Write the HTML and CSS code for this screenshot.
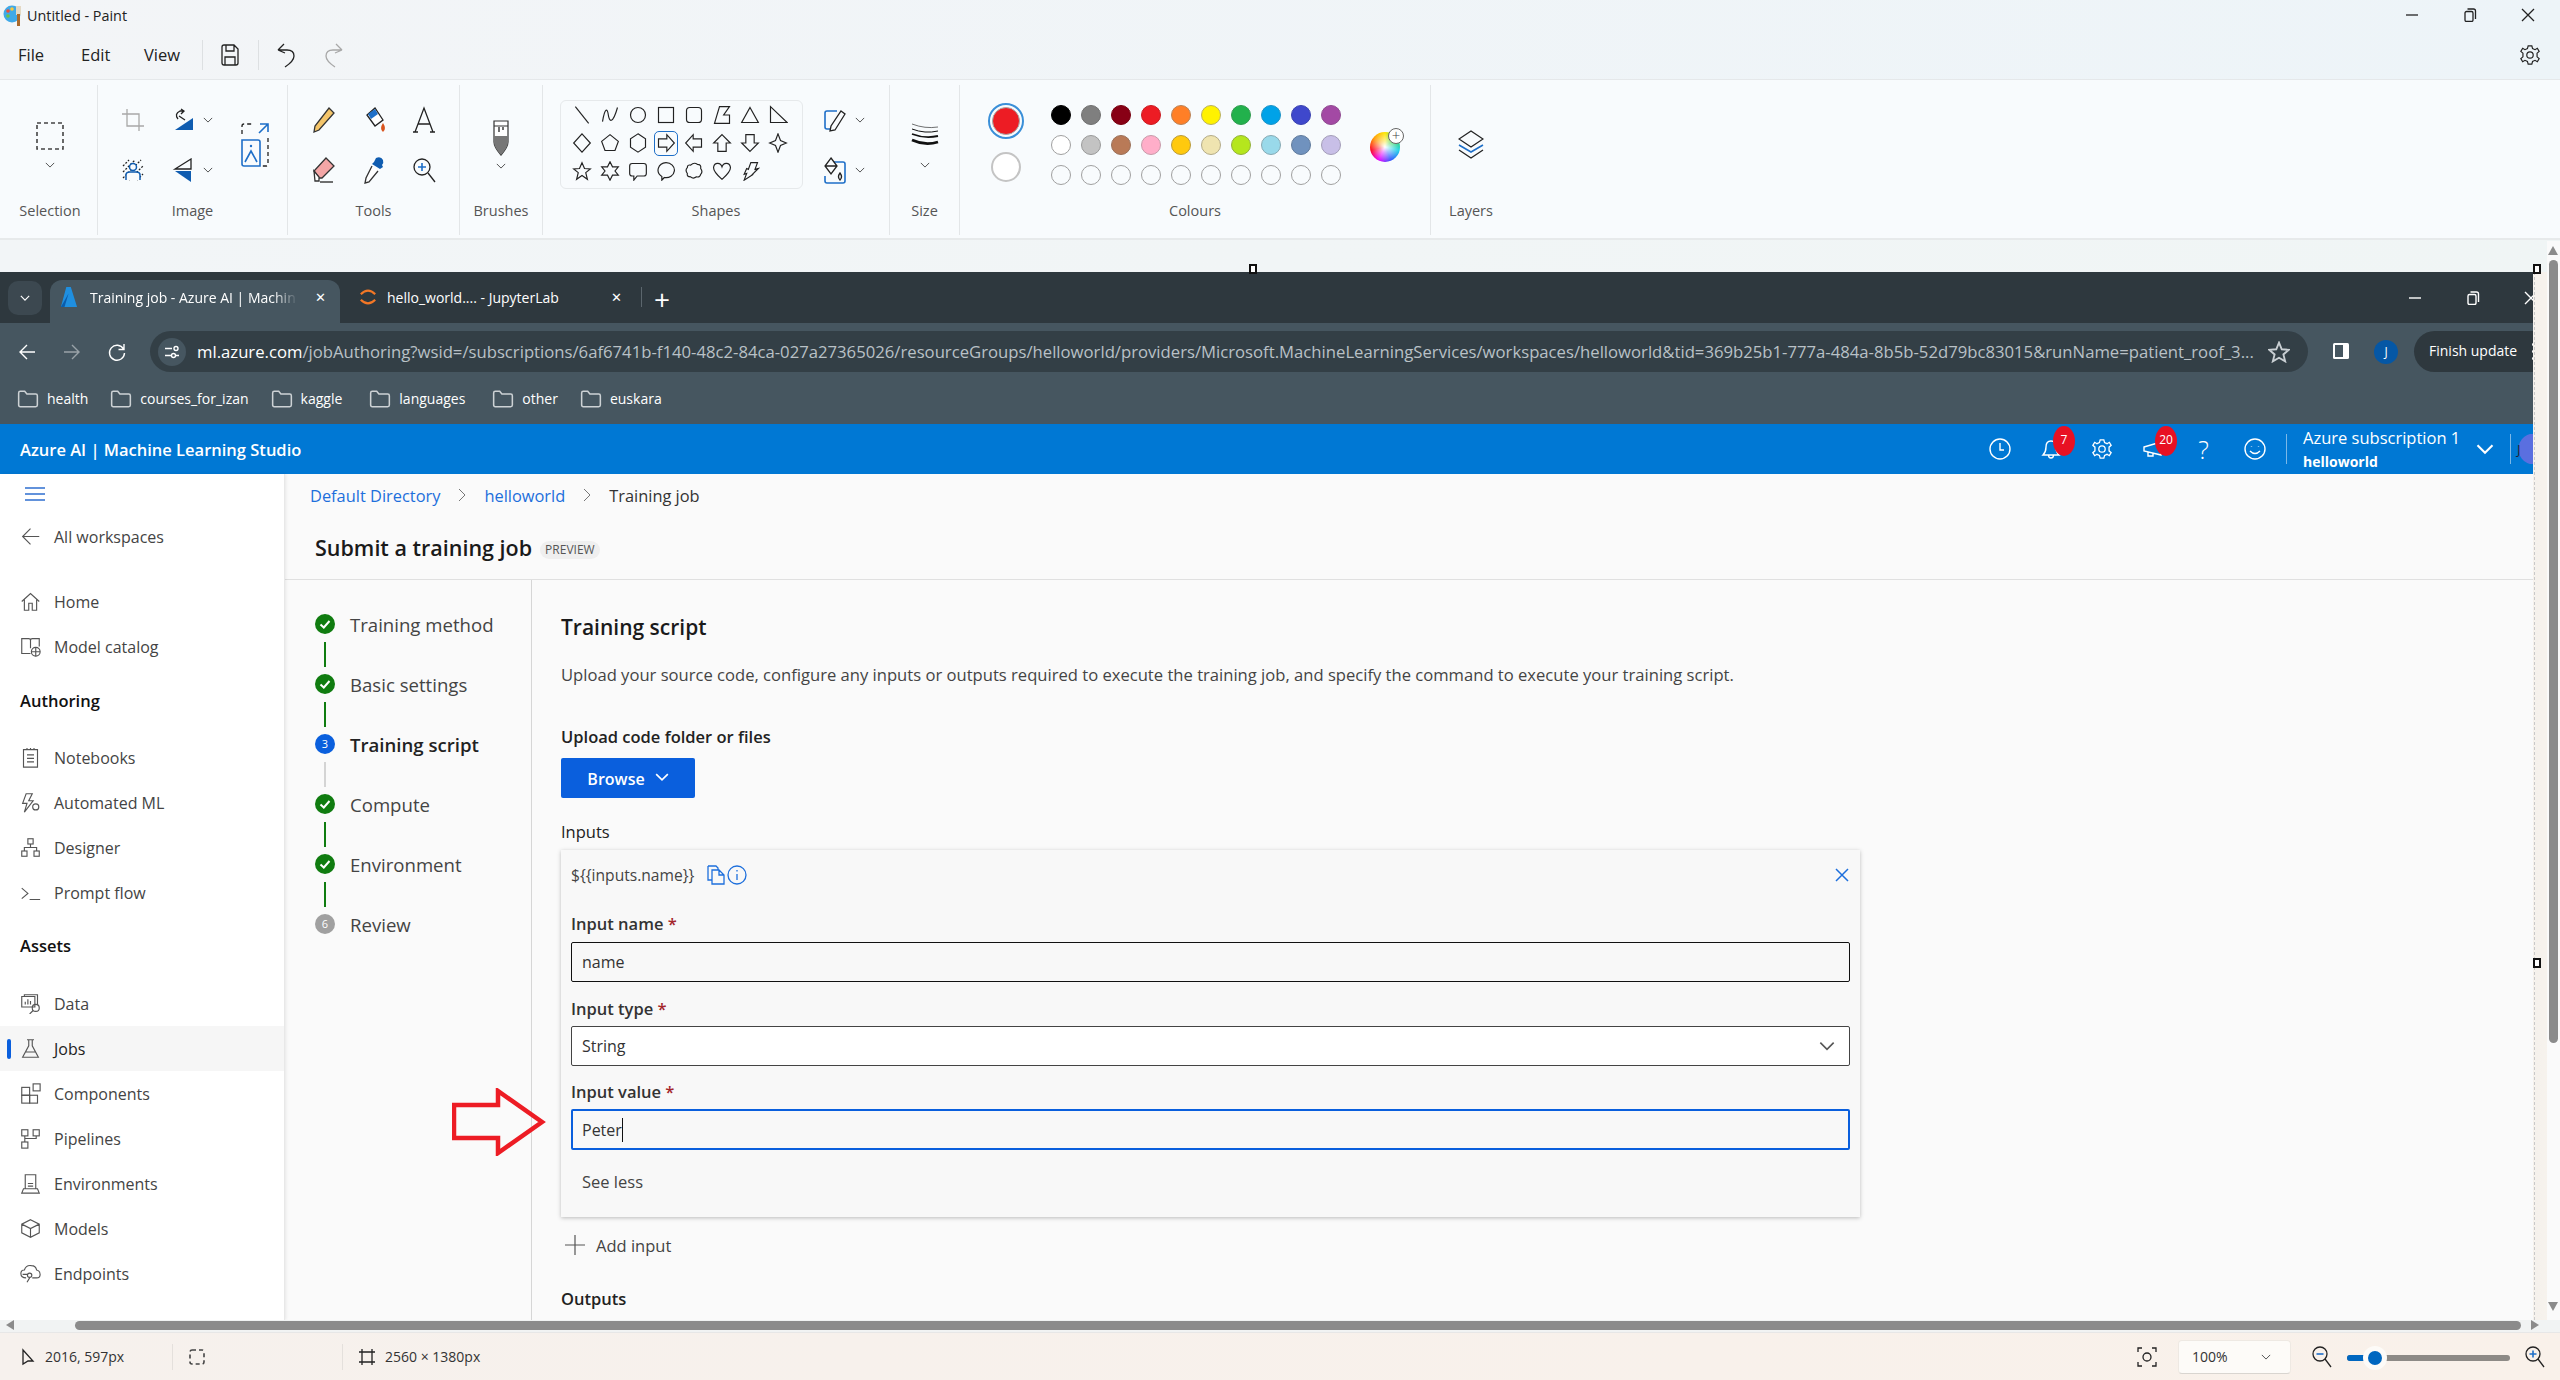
FILE: index.html
```html
<!DOCTYPE html>
<html>
<head>
  <title>Untitled - Paint</title>
  <link rel="stylesheet" href="styles.css">
</head>
<body>
<svg class="defs" width="0" height="0">
  <symbol id="chev" viewBox="0 0 12 12"><path d="M1 3.5 L6 8.5 L11 3.5"/></symbol>
  <symbol id="folder" viewBox="0 0 20 18"><path d="M1.5 3.5 Q1.5 2 3 2 H7 L9 4.5 H17 Q18.5 4.5 18.5 6 V14.5 Q18.5 16 17 16 H3 Q1.5 16 1.5 14.5 Z"/></symbol>
  <symbol id="check" viewBox="0 0 20 20"><circle class="solid" cx="10" cy="10" r="10"/><path class="tick" d="M5.5 10.5 L8.8 13.5 L14.5 7"/></symbol>
</svg>

<div class="app">
  <div class="paint-top">
    <div class="titlebar">
      <svg class="paint-logo" viewBox="0 0 20 24" width="20" height="24">
        <circle cx="9" cy="11" r="8.5" fill="#3fa9e8"/>
        <circle cx="5" cy="8" r="1.8" fill="#e94f3d"/>
        <circle cx="9" cy="6" r="1.8" fill="#f6c83e"/>
        <circle cx="5" cy="13" r="1.8" fill="#6cc24a"/>
        <rect x="13" y="3" width="5" height="9" fill="#e4d9c4"/>
        <rect x="14" y="11" width="3" height="12" fill="#a8692c"/>
      </svg>
      <span class="title-text">Untitled - Paint</span>
      <div class="win-btns">
        <svg class="ic-line" viewBox="0 0 14 14" width="14" height="14"><path d="M1 7 H13"/></svg>
        <svg class="ic-line" viewBox="0 0 14 14" width="14" height="14"><rect x="2" y="3.5" width="8" height="10" rx="1.5"/><path d="M4.5 1 H10.5 Q12.5 1 12.5 3 V11"/></svg>
        <svg class="ic-line" viewBox="0 0 14 14" width="14" height="14"><path d="M1 1 L13 13 M13 1 L1 13"/></svg>
      </div>
    </div>
    <div class="menubar">
      <span class="menu-item">File</span>
      <span class="menu-item">Edit</span>
      <span class="menu-item">View</span>
      <span class="menu-sep"></span>
      <svg class="ic-line" viewBox="0 0 20 24" width="20" height="26"><path d="M2 4 Q2 2 4 2 H14 L18 6 V20 Q18 22 16 22 H4 Q2 22 2 20 Z M6 2 V8 H14 V2 M5 22 V14 H15 V22"/></svg>
      <span class="menu-sep"></span>
      <svg class="ic-line" viewBox="0 0 20 28" width="20" height="28"><path d="M2 9 L8 3 M2 9 L9 12 M2 9 H11 Q18 9 18 15 Q18 20 9 26"/></svg>
      <svg class="ic-line dim redo" viewBox="0 0 20 28" width="20" height="28"><path d="M18 9 L12 3 M18 9 L11 12 M18 9 H9 Q2 9 2 15 Q2 20 11 26"/></svg>
      <svg class="ic-line gear-top" viewBox="0 0 24 24" width="22" height="22"><circle cx="12" cy="12" r="3.5"/><path d="M10 2 H14 L14.8 5 L17.5 6.2 L20 4.7 L22 8 L19.7 10 V14 L22 16 L20 19.3 L17.5 17.8 L14.8 19 L14 22 H10 L9.2 19 L6.5 17.8 L4 19.3 L2 16 L4.3 14 V10 L2 8 L4 4.7 L6.5 6.2 L9.2 5 Z"/></svg>
    </div>
  </div>

  <div class="ribbon">
    <div class="group g-selection">
      <div class="group-body col-center">
        <svg class="ic-line dashed" viewBox="0 0 28 28" width="28" height="28"><rect x="1" y="1" width="26" height="26"/></svg>
        <svg class="chev chev-big" width="10" height="10"><use href="#chev"/></svg>
      </div>
      <div class="group-label">Selection</div>
    </div>

    <div class="group g-image">
      <div class="group-body tool-grid image-grid">
        <svg class="ic-line dim" viewBox="0 0 24 24" width="24" height="24"><path d="M6 1 V18 H23 M1 6 H18 V23"/></svg>
        <div class="split">
          <svg viewBox="0 0 24 24" width="24" height="24"><path fill="#0f5cb0" d="M22 10 V22 H4 Z"/><path class="stroke" d="M7 11 Q3 6 9 3 H13 M10 1 L13 3 L10 6 M14 12 L8 8"/></svg>
          <svg class="chev" width="10" height="10"><use href="#chev"/></svg>
        </div>
        <svg class="ic-wide-span" viewBox="0 0 30 46" width="30" height="46"><path class="stroke-blue" d="M2 18 H18 Q20 18 20 20 V44 H4 Q2 44 2 42 Z M5 40 L11 29 L17 40 M20 2 L28 2 L28 10 M28 2 L19 11"/><path class="stroke dash-dark" d="M2 12 V4 Q2 2 4 2 H14 M28 16 V42 Q28 44 26 44 H22"/><circle cx="11" cy="24" r="1.2" fill="#1e6fc8"/></svg>
        <svg viewBox="0 0 24 24" width="24" height="24"><path class="stroke" stroke-dasharray="2 1.5" d="M2 8 L8 2 M2 14 L14 2 M2 20 L20 2 M8 22 L22 8 M16 22 L22 16"/><circle cx="12" cy="9" r="3.5" fill="#f9fbfd" stroke="#0f5cb0" stroke-width="1.5"/><path d="M5 22 V17 Q5 14 9 14 H15 Q19 14 19 17 V22" fill="#f9fbfd" stroke="#0f5cb0" stroke-width="1.5"/></svg>
        <div class="split">
          <svg viewBox="0 0 24 24" width="24" height="24"><path class="stroke" d="M20 1 L4 11 H20 Z"/><path fill="#0f5cb0" d="M4 13 H20 V24 Z"/></svg>
          <svg class="chev" width="10" height="10"><use href="#chev"/></svg>
        </div>
      </div>
      <div class="group-label">Image</div>
    </div>

    <div class="group g-tools">
      <div class="group-body tool-grid tools-grid">
        <svg viewBox="0 0 24 28" width="24" height="28"><path fill="#f4c56a" stroke="#333" stroke-width="1.3" d="M17 2 L22 7 L7 24 L2 26 L3 20 Z"/></svg>
        <svg viewBox="0 0 26 28" width="26" height="28"><path fill="#fff" stroke="#222" stroke-width="1.3" d="M6 9 L14 2 L22 14 L14 20 Z"/><path fill="#1e6fc8" d="M7 8 L14 3 L17 8 L10 13 Z"/><path fill="#d9541e" d="M22 17 Q26 23 22 26 Q18 23 22 17 Z"/></svg>
        <svg viewBox="0 0 24 28" width="24" height="28"><path class="stroke" d="M3 26 L12 2 L21 26 M6 18 H18 M1 26 H6 M18 26 H23"/></svg>
        <svg viewBox="0 0 24 28" width="24" height="28"><path fill="#f4a6a6" stroke="#333" stroke-width="1.3" d="M14 2 L22 10 L10 22 H7 L2 15 Z"/><path fill="#fff" stroke="#333" stroke-width="1.3" d="M2 15 L7 21 V25 H3 Z"/><path class="stroke" d="M8 26 H21"/></svg>
        <svg viewBox="0 0 24 28" width="24" height="28"><path fill="#fff" stroke="#333" stroke-width="1.3" d="M10 10 L4 22 L3 27 L7 26 L16 15"/><path fill="#0f5cb0" d="M14 2 Q19 0 21 4 Q22 7 20 9 L21 11 L18 13 L10 8 L12 6 Z"/></svg>
        <svg viewBox="0 0 24 28" width="24" height="28"><circle class="stroke" cx="10" cy="11" r="8"/><path class="stroke" d="M16 17 L23 26"/><path class="stroke-blue" d="M6 11 H14 M10 7 V15"/></svg>
      </div>
      <div class="group-label">Tools</div>
    </div>

    <div class="group g-brushes">
      <div class="group-body col-center">
        <svg viewBox="0 0 20 36" width="20" height="36"><path fill="#fff" stroke="#333" stroke-width="1.2" d="M3 1 H17 V6 H3 Z M3 6 H17 V22 Q17 27 10 35 Q3 27 3 22 Z"/><path fill="#777" d="M3 16 H17 V22 Q17 27 10 35 Q3 27 3 22 Z"/><path class="stroke" d="M8 7 V12 M12 7 V10"/></svg>
        <svg class="chev chev-brush" width="10" height="10"><use href="#chev"/></svg>
      </div>
      <div class="group-label">Brushes</div>
    </div>

    <div class="group g-shapes">
      <div class="group-body shapes-row">
        <div class="shape-box">
          <svg class="shape" viewBox="0 0 24 24"><path d="M4 2 L20 22"/></svg>
          <svg class="shape" viewBox="0 0 24 24"><path d="M3 20 C6 2 9 4 10 12 C11 20 15 24 21 3"/></svg>
          <svg class="shape" viewBox="0 0 24 24"><circle cx="12" cy="12" r="9"/></svg>
          <svg class="shape" viewBox="0 0 24 24"><rect x="3" y="3" width="18" height="18"/></svg>
          <svg class="shape" viewBox="0 0 24 24"><rect x="3" y="3" width="18" height="18" rx="4"/></svg>
          <svg class="shape" viewBox="0 0 24 24"><path d="M9 2 H21 L14 12 H21 V22 H3 Z"/></svg>
          <svg class="shape" viewBox="0 0 24 24"><path d="M12 3 L22 21 H2 Z"/></svg>
          <svg class="shape" viewBox="0 0 24 24"><path d="M3 2 L23 21 H3 Z"/></svg>
          <svg class="shape" viewBox="0 0 24 24"><path d="M12 1 L22 12 L12 23 L2 12 Z"/></svg>
          <svg class="shape" viewBox="0 0 24 24"><path d="M12 2 L22 10 L18 21 H6 L2 10 Z"/></svg>
          <svg class="shape" viewBox="0 0 24 24"><path d="M12 1 L21 7 V17 L12 23 L3 17 V7 Z"/></svg>
          <span class="shape-on"><svg class="shape" viewBox="0 0 24 24"><path d="M3 7 H13 V2 L22 12 L13 22 V17 H3 Z"/></svg></span>
          <svg class="shape" viewBox="0 0 24 24"><path d="M21 7 H11 V2 L2 12 L11 22 V17 H21 Z"/></svg>
          <svg class="shape" viewBox="0 0 24 24"><path d="M12 2 L22 12 H17 V22 H7 V12 H2 Z"/></svg>
          <svg class="shape" viewBox="0 0 24 24"><path d="M12 22 L22 12 H17 V2 H7 V12 H2 Z"/></svg>
          <svg class="shape" viewBox="0 0 24 24"><path d="M12 1 L15 9 L22 12 L15 15 L12 23 L9 15 L2 12 L9 9 Z"/></svg>
          <svg class="shape" viewBox="0 0 24 24"><path d="M12 2 L15 9 L22 9.5 L16.5 14 L18.5 22 L12 17.5 L5.5 22 L7.5 14 L2 9.5 L9 9 Z"/></svg>
          <svg class="shape" viewBox="0 0 24 24"><path d="M12 1 L15 7 L22 7 L18 12 L22 17 L15 17 L12 23 L9 17 L2 17 L6 12 L2 7 L9 7 Z"/></svg>
          <svg class="shape" viewBox="0 0 24 24"><path d="M5 3 H19 Q22 3 22 6 V15 Q22 18 19 18 H11 L7 23 V18 H5 Q2 18 2 15 V6 Q2 3 5 3 Z"/></svg>
          <svg class="shape" viewBox="0 0 24 24"><path d="M12 2 A10 9 0 1 1 10 19.8 L7 23 V18.5 A10 9 0 0 1 12 2 Z"/></svg>
          <svg class="shape" viewBox="0 0 24 24"><path d="M8 5 Q12 1 16 4 Q21 4 20 9 Q23 13 20 16 Q19 20 15 19 Q11 22 8 19 Q3 19 4 15 Q1 11 4 8 Q4 4 8 5 Z"/></svg>
          <svg class="shape" viewBox="0 0 24 24"><path d="M12 22 C4 15 1 11 2 7 C3 2 10 1 12 7 C14 1 21 2 22 7 C23 11 20 15 12 22 Z"/></svg>
          <svg class="shape" viewBox="0 0 24 24"><path d="M13 2 H21 L18 10 L22 9 L14 17 L16 16 L5 23 L8 15 L5 16 L8 9 L10 10 Z"/></svg>
        </div>
        <div class="shape-opts">
          <div class="split">
            <svg viewBox="0 0 24 24" width="24" height="24"><path class="stroke-blue" d="M14 3 H4 Q2 3 2 5 V19 Q2 21 4 21 H8"/><path fill="#f9fbfd" stroke="#222" stroke-width="1.3" d="M18 3 L22 6 L12 22 L7 23 L8 18 Z"/></svg>
            <svg class="chev" width="10" height="10"><use href="#chev"/></svg>
          </div>
          <div class="split">
            <svg viewBox="0 0 24 28" width="24" height="28"><path class="stroke-blue" d="M6 6 H20 Q22 6 22 8 V25 Q22 27 20 27 H4 Q2 27 2 25 V20"/><path fill="#f9fbfd" stroke="#222" stroke-width="1.3" d="M8 2 L14 10 L8 18 L2 10 Z M2 10 H14"/><path class="stroke" d="M17 17 Q20 21 17 24 Q14 21 17 17 Z"/></svg>
            <svg class="chev" width="10" height="10"><use href="#chev"/></svg>
          </div>
        </div>
      </div>
      <div class="group-label">Shapes</div>
    </div>

    <div class="group g-size">
      <div class="group-body col-center">
        <svg class="size-ico" viewBox="0 0 28 24" width="28" height="24">
          <path stroke-width="0.6" d="M1 2 Q14 7 27 5"/>
          <path stroke-width="1" d="M1 7 Q14 12 27 9"/>
          <path stroke-width="1.8" d="M1 12 Q14 17 27 14"/>
          <path stroke-width="2.8" d="M1 18 Q14 24 27 20"/>
        </svg>
        <svg class="chev chev-size" width="10" height="10"><use href="#chev"/></svg>
      </div>
      <div class="group-label">Size</div>
    </div>

    <div class="group g-colours">
      <div class="group-body colours-row">
        <div class="current">
          <div class="cur-primary"><span></span></div>
          <div class="cur-secondary"></div>
        </div>
        <div class="palette">
          <i class="sw c1"></i><i class="sw c2"></i><i class="sw c3"></i><i class="sw c4"></i><i class="sw c5"></i><i class="sw c6"></i><i class="sw c7"></i><i class="sw c8"></i><i class="sw c9"></i><i class="sw c10"></i>
          <i class="sw c11"></i><i class="sw c12"></i><i class="sw c13"></i><i class="sw c14"></i><i class="sw c15"></i><i class="sw c16"></i><i class="sw c17"></i><i class="sw c18"></i><i class="sw c19"></i><i class="sw c20"></i>
          <i class="sw"></i><i class="sw"></i><i class="sw"></i><i class="sw"></i><i class="sw"></i><i class="sw"></i><i class="sw"></i><i class="sw"></i><i class="sw"></i><i class="sw"></i>
        </div>
        <div class="wheel"><span class="wheel-plus">+</span></div>
      </div>
      <div class="group-label">Colours</div>
    </div>

    <div class="group g-layers">
      <div class="group-body col-center">
        <svg viewBox="0 0 26 30" width="26" height="30">
          <path class="stroke" d="M13 1 L25 9 L13 17 L1 9 Z"/>
          <path class="stroke-blue" d="M1 15 L13 22 L25 15"/>
          <path class="stroke" d="M1 20 L13 28 L25 20"/>
        </svg>
      </div>
      <div class="group-label">Layers</div>
    </div>
  </div>

  <div class="ribbon-gap"></div>

  <div class="work">
    <div class="browser">
      <div class="tabstrip">
        <div class="tab-search"><svg class="chev chev-white" width="12" height="12"><use href="#chev"/></svg></div>
        <div class="tab tab-active">
          <svg viewBox="0 0 20 24" width="18" height="22"><path fill="#1f8fe0" d="M7 1 H12 L19 23 H1 Z"/><path fill="#0b5cab" d="M9.5 8 L5 23 H1 Z"/></svg>
          <span class="tab-title fade">Training job - Azure AI | Machin</span>
          <span class="tab-x">✕</span>
        </div>
        <div class="tab tab-other">
          <svg viewBox="0 0 20 24" width="18" height="22"><path fill="none" stroke="#f37726" stroke-width="2.4" d="M2 9 Q10 1 18 9 M2 15 Q10 23 18 15"/></svg>
          <span class="tab-title">hello_world.... - JupyterLab</span>
          <span class="tab-x">✕</span>
        </div>
        <span class="tab-sep"></span>
        <span class="tab-plus">+</span>
        <div class="win-btns chrome-btns">
          <svg class="ic-white" viewBox="0 0 14 14" width="14" height="14"><path d="M1 7 H13"/></svg>
          <svg class="ic-white" viewBox="0 0 14 14" width="14" height="14"><rect x="2" y="3.5" width="8" height="10" rx="1.5"/><path d="M4.5 1 H10.5 Q12.5 1 12.5 3 V11"/></svg>
          <svg class="ic-white" viewBox="0 0 14 14" width="14" height="14"><path d="M1 1 L13 13 M13 1 L1 13"/></svg>
        </div>
      </div>

      <div class="toolbar">
        <svg class="ic-white nav" viewBox="0 0 20 20" width="20" height="20"><path d="M18 10 H3 M10 3 L3 10 L10 17"/></svg>
        <svg class="ic-white nav dim-nav" viewBox="0 0 20 20" width="20" height="20"><path d="M2 10 H17 M10 3 L17 10 L10 17"/></svg>
        <svg class="ic-white nav" viewBox="0 0 20 20" width="20" height="20"><path d="M16.5 7 A7.5 7.5 0 1 0 17.5 11 M17 2 V7.5 H11.5"/></svg>
        <div class="omnibox">
          <span class="site-btn">
            <svg class="ic-white" viewBox="0 0 16 16" width="16" height="16"><path d="M1 4.5 H8 M12 11.5 H15 M1 11.5 H7"/><circle cx="12" cy="4.5" r="2"/><circle cx="9.5" cy="11.5" r="2"/></svg>
          </span>
          <span class="url"><b>ml.azure.com</b>/jobAuthoring?wsid=/subscriptions/6af6741b-f140-48c2-84ca-027a27365026/resourceGroups/helloworld/providers/Microsoft.MachineLearningServices/workspaces/helloworld&amp;tid=369b25b1-777a-484a-8b5b-52d79bc83015&amp;runName=patient_roof_3...</span>
          <svg class="star" viewBox="0 0 20 20" width="22" height="22"><path d="M10 1.5 L12.5 7.5 L19 8 L14 12.2 L15.6 18.5 L10 15.2 L4.4 18.5 L6 12.2 L1 8 L7.5 7.5 Z"/></svg>
        </div>
        <svg class="side-ico" viewBox="0 0 18 18" width="18" height="26"><rect x="1" y="1" width="16" height="16" rx="1.5" fill="#fff"/><rect x="3" y="3" width="8" height="12" fill="#465660"/></svg>
        <span class="avatar-j">J</span>
        <div class="finish-pill">Finish update<span class="dots"></span></div>
      </div>

      <div class="bookmarks">
        <span class="bm"><svg class="folder"><use href="#folder"/></svg>health</span>
        <span class="bm"><svg class="folder"><use href="#folder"/></svg>courses_for_izan</span>
        <span class="bm bm-wide"><svg class="folder"><use href="#folder"/></svg>kaggle</span>
        <span class="bm bm-wide"><svg class="folder"><use href="#folder"/></svg>languages</span>
        <span class="bm"><svg class="folder"><use href="#folder"/></svg>other</span>
        <span class="bm"><svg class="folder"><use href="#folder"/></svg>euskara</span>
      </div>

      <div class="appbar">
        <span class="app-name">Azure AI | Machine Learning Studio</span>
        <div class="app-icons">
          <span class="app-ico"><svg class="ic-white" viewBox="0 0 22 22" width="22" height="22"><circle cx="11" cy="11" r="10"/><path d="M11 5 V12 H15"/></svg></span>
          <span class="app-ico"><svg class="ic-white" viewBox="0 0 22 22" width="22" height="22"><path d="M3 17 Q6 14 6 9 Q6 3 11 3 Q16 3 16 9 Q16 14 19 17 Z M8.5 17 Q8.5 20 11 20 Q13.5 20 13.5 17"/></svg><em class="badge">7</em></span>
          <span class="app-ico"><svg class="ic-white" viewBox="0 0 24 24" width="22" height="22"><circle cx="12" cy="12" r="3.5"/><path d="M10 2 H14 L14.8 5 L17.5 6.2 L20 4.7 L22 8 L19.7 10 V14 L22 16 L20 19.3 L17.5 17.8 L14.8 19 L14 22 H10 L9.2 19 L6.5 17.8 L4 19.3 L2 16 L4.3 14 V10 L2 8 L4 4.7 L6.5 6.2 L9.2 5 Z"/></svg></span>
          <span class="app-ico"><svg class="ic-white" viewBox="0 0 22 22" width="22" height="22"><path d="M2 9 L19 4 V17 L2 13 Z M6 14 V18 H11 V15.5"/></svg><em class="badge">20</em></span>
          <span class="app-ico help">?</span>
          <span class="app-ico"><svg class="ic-white" viewBox="0 0 22 22" width="22" height="22"><circle cx="11" cy="11" r="10"/><path d="M6 13 Q11 18 16 13 M7.5 8 V8.6 M14.5 8 V8.6"/></svg></span>
        </div>
        <div class="sub-box">
          <div class="sub-name">Azure subscription 1</div>
          <div class="sub-ws">helloworld</div>
        </div>
        <svg class="chev chev-white chev-sub"><use href="#chev"/></svg>
        <span class="avatar-p">J</span>
      </div>

      <div class="studio">
        <nav class="sidebar">
          <div class="burger"><svg viewBox="0 0 20 14" width="20" height="14"><path d="M0 1 H20 M0 7 H20 M0 13 H20"/></svg></div>
          <div class="nav-row back">
            <svg class="nav-ico" viewBox="0 0 24 24"><path d="M22 12 H3 M12 3 L3 12 L12 21"/></svg>All workspaces
          </div>
          <div class="nav-row">
            <svg class="nav-ico" viewBox="0 0 24 24"><path d="M2 12 L12 3 L22 12 M5 10 V22 H10 V14 H14 V22 H19 V10"/></svg>Home
          </div>
          <div class="nav-row">
            <svg class="nav-ico" viewBox="0 0 24 24"><path d="M12 20 H2 V3 H10 Q12 3 12 5 Q12 3 14 3 H22 V12 M12 5 V14"/><circle cx="18" cy="18" r="5"/><path d="M13 18 H23 M18 13 V23"/></svg>Model catalog
          </div>
          <div class="nav-head">Authoring</div>
          <div class="nav-row first">
            <svg class="nav-ico" viewBox="0 0 24 24"><path d="M4 3 H20 V23 H4 Z M8 1 V3 M12 1 V3 M16 1 V3 M8 9 H16 M8 13 H16 M8 17 H16"/></svg>Notebooks
          </div>
          <div class="nav-row">
            <svg class="nav-ico" viewBox="0 0 24 24"><path d="M7 2 H14 L10 10 H15 L5 23 L8 13 H3 Z"/><circle cx="18" cy="17" r="3.5"/></svg>Automated ML
          </div>
          <div class="nav-row">
            <svg class="nav-ico" viewBox="0 0 24 24"><rect x="9" y="2" width="6" height="6"/><rect x="2" y="16" width="6" height="6"/><rect x="16" y="16" width="6" height="6"/><path d="M12 8 V12 M5 16 V12 H19 V16"/></svg>Designer
          </div>
          <div class="nav-row">
            <svg class="nav-ico" viewBox="0 0 24 24"><path d="M2 7 L9 13 L2 19 M11 20 H23"/></svg>Prompt flow
          </div>
          <div class="nav-head assets">Assets</div>
          <div class="nav-row first">
            <svg class="nav-ico" viewBox="0 0 24 24"><path d="M5 4 V2 H20 V14 M2 4 H17 V16 H2 Z M6 13 V10 M9 13 V7 M12 13 V9"/><circle cx="18" cy="17" r="4"/><path d="M15 20 L11 24"/></svg>Data
          </div>
          <div class="nav-row active">
            <svg class="nav-ico" viewBox="0 0 24 24"><path d="M8 2 H16 M10 2 V9 L3 22 H21 L14 9 V2 M6 16 H18"/></svg>Jobs
          </div>
          <div class="nav-row">
            <svg class="nav-ico" viewBox="0 0 24 24"><rect x="2" y="5" width="9" height="9"/><rect x="11" y="14" width="9" height="9"/><rect x="2" y="14" width="9" height="9"/><rect x="15" y="1" width="8" height="8"/></svg>Components
          </div>
          <div class="nav-row">
            <svg class="nav-ico" viewBox="0 0 24 24"><rect x="2" y="2" width="7" height="7"/><rect x="15" y="2" width="7" height="7"/><rect x="2" y="16" width="7" height="7"/><path d="M5.5 9 V16 M5.5 12 H18.5 V9"/></svg>Pipelines
          </div>
          <div class="nav-row">
            <svg class="nav-ico" viewBox="0 0 24 24"><path d="M6 2 H18 V18 H6 Z M9 12 H15 M9 15 H15 M4 18 H20 L22 23 H2 Z"/></svg>Environments
          </div>
          <div class="nav-row">
            <svg class="nav-ico" viewBox="0 0 24 24"><path d="M12 2 L22 7 V17 L12 22 L2 17 V7 Z M2 7 L12 12 L22 7 M12 12 V22"/></svg>Models
          </div>
          <div class="nav-row">
            <svg class="nav-ico" viewBox="0 0 24 24"><path d="M7 17 Q1 17 1 12 Q1 8 5 8 Q7 2 13 3 Q18 3 19 8 Q23 9 23 13 Q23 17 19 17 H14"/><circle cx="11" cy="14" r="2.5"/><path d="M3 13 H8 M11 17 L8 22"/></svg>Endpoints
          </div>
        </nav>

        <main class="main">
          <div class="crumbs">
            <a>Default Directory</a>
            <svg class="crumb-sep" viewBox="0 0 10 16" width="10" height="16"><path d="M2 2 L8 8 L2 14"/></svg>
            <a>helloworld</a>
            <svg class="crumb-sep" viewBox="0 0 10 16" width="10" height="16"><path d="M2 2 L8 8 L2 14"/></svg>
            <span>Training job</span>
          </div>
          <div class="page-title">
            <h1>Submit a training job</h1>
            <span class="chip">PREVIEW</span>
          </div>
          <div class="wizard">
            <div class="steps">
              <div class="step"><svg class="step-ico"><use href="#check"/></svg>Training method</div>
              <div class="link done"></div>
              <div class="step"><svg class="step-ico"><use href="#check"/></svg>Basic settings</div>
              <div class="link done"></div>
              <div class="step current-step"><span class="num num-blue">3</span>Training script</div>
              <div class="link"></div>
              <div class="step"><svg class="step-ico"><use href="#check"/></svg>Compute</div>
              <div class="link done"></div>
              <div class="step"><svg class="step-ico"><use href="#check"/></svg>Environment</div>
              <div class="link done"></div>
              <div class="step"><span class="num num-gray">6</span>Review</div>
            </div>

            <div class="content">
              <h2>Training script</h2>
              <p class="desc">Upload your source code, configure any inputs or outputs required to execute the training job, and specify the command to execute your training script.</p>
              <div class="label upload-label">Upload code folder or files</div>
              <button class="browse">Browse<svg class="chev chev-white"><use href="#chev"/></svg></button>
              <div class="inputs-label">Inputs</div>
              <div class="input-card">
                <div class="card-top">
                  <span>${{inputs.name}}</span>
                  <svg class="copy" viewBox="0 0 18 20" width="18" height="20"><path d="M1 1 H9 L11 3 V5 M1 1 V15 H5 M5 5 H12 L17 10 V19 H5 Z M12 5 V10 H17"/></svg>
                  <svg class="copy" viewBox="0 0 20 20" width="20" height="20"><circle cx="10" cy="10" r="9"/><path d="M10 9 V15 M10 5 V6.5"/></svg>
                  <svg class="card-x" viewBox="0 0 16 16" width="16" height="16"><path d="M2 2 L14 14 M14 2 L2 14"/></svg>
                </div>
                <div class="field-label l-first">Input name <i>*</i></div>
                <div class="field f-dark">name</div>
                <div class="field-label l-second">Input type <i>*</i></div>
                <div class="field f-select">String<svg class="chev chev-gray"><use href="#chev"/></svg></div>
                <div class="field-label l-third">Input value <i>*</i></div>
                <div class="field f-focus">Peter<span class="caret"></span></div>
                <div class="see-less">See less</div>
              </div>
              <div class="add-input">
                <svg viewBox="0 0 20 20" width="20" height="20"><path d="M10 0 V20 M0 10 H20"/></svg>Add input
              </div>
              <div class="label outputs-label">Outputs</div>
            </div>
          </div>
        </main>
      </div>
    </div>
    <div class="canvas-edge"></div>
  </div>

  <div class="hscroll-band"></div>

  <div class="statusbar">
    <div class="st st-pos">
      <svg class="ic-line" viewBox="0 0 14 18" width="14" height="18"><path d="M2 2 L12 13 H7 L2 16 Z"/></svg>
      <span>2016, 597px</span>
    </div>
    <div class="st st-sel">
      <svg class="ic-line dashed" viewBox="0 0 16 16" width="16" height="16"><rect x="1" y="1" width="14" height="14" rx="2"/></svg>
    </div>
    <div class="st st-size">
      <svg class="ic-line" viewBox="0 0 16 16" width="16" height="16"><path d="M3 0 V16 M13 0 V16 M0 3 H16 M0 13 H16"/></svg>
      <span>2560 × 1380px</span>
    </div>
    <div class="st-right">
      <svg class="ic-line" viewBox="0 0 20 20" width="20" height="20"><path d="M1 5 V1 H5 M15 1 H19 V5 M1 15 V19 H5 M15 19 H19 V15"/><circle cx="10" cy="10" r="4"/></svg>
      <div class="zoom-box"><span>100%</span><svg class="chev"><use href="#chev"/></svg></div>
      <svg viewBox="0 0 20 22" width="20" height="22"><circle class="stroke" cx="8" cy="8" r="7"/><path class="stroke" d="M13 13 L19 21"/><path class="stroke-blue" d="M4.5 8 H11.5"/></svg>
      <div class="slider"><span class="slider-fill"></span><span class="slider-thumb"></span></div>
      <svg viewBox="0 0 20 22" width="20" height="22"><circle class="stroke" cx="8" cy="8" r="7"/><path class="stroke" d="M13 13 L19 21"/><path class="stroke-blue" d="M4.5 8 H11.5 M8 4.5 V11.5"/></svg>
    </div>
  </div>

  <!-- overlays: things painted on the canvas and the Paint scrollbars -->
  <svg class="red-arrow" viewBox="0 0 94 68" width="94" height="68"><path d="M2 17 H46 V3 L90 34 L46 65 V50 H2 Z"/></svg>
  <i class="handle h-top"></i>
  <i class="handle h-corner"></i>
  <i class="handle h-side"></i>
  <div class="vscroll"><i class="arrow-up"></i><span class="v-thumb"></span><i class="arrow-down"></i></div>
  <div class="hscroll"><i class="arrow-left"></i><span class="h-thumb"></span><i class="arrow-right"></i></div>
</div>
</body>
</html>
```

FILE: styles.css
```css
* {
  box-sizing: border-box;
  margin: 0;
  padding: 0;
}
body {
  font-family: "Open Sans", "Noto Sans", sans-serif;
  color: #222;
  overflow: hidden;
}
.defs {
  position: absolute;
}
svg {
  display: block;
  flex-shrink: 0;
}
symbol path {
  fill: none;
  stroke: inherit;
}
.app {
  position: relative;
  width: 2560px;
  height: 1380px;
  display: flex;
  flex-direction: column;
  overflow: hidden;
  background: #f5f1ec;
}

/* generic icon strokes */
.stroke {
  fill: none;
  stroke: #222;
  stroke-width: 1.3;
}
.stroke-blue {
  fill: none;
  stroke: #1e6fc8;
  stroke-width: 1.6;
}
.dash-dark {
  stroke-dasharray: 4 3;
}
.ic-line {
  fill: none;
  stroke: #222;
  stroke-width: 1.3;
}
.ic-line.dim {
  stroke: #a8a8a8;
}
.ic-line.dashed rect {
  stroke-dasharray: 4 3;
  stroke-width: 1.6;
  stroke: #444;
}
.ic-white {
  fill: none;
  stroke: #fff;
  stroke-width: 1.4;
}
.chev {
  width: 10px;
  height: 10px;
  fill: none;
  stroke: #555;
  stroke-width: 1.2;
}
.chev-white {
  stroke: #fff;
  stroke-width: 1.4;
}
.chev-gray {
  stroke: #555;
}

/* paint title + menu */
.paint-top {
  height: 79px;
  background: linear-gradient(90deg, #f3f5f7, #edf4f8);
}
.titlebar {
  height: 40px;
  display: flex;
  align-items: center;
  padding: 0 0 10px 3px;
  font-size: 14.4px;
}
.paint-logo {
  margin-right: 4px;
}
.title-text {
  color: #222;
}
.win-btns {
  margin-left: auto;
  display: flex;
  gap: 44px;
  padding-right: 25px;
}
.menubar {
  height: 39px;
  display: flex;
  align-items: center;
  padding: 0 20px 10px 18px;
  font-size: 16.5px;
}
.menu-item {
  width: 63px;
}
.menu-sep {
  width: 1px;
  height: 30px;
  background: #dde0e2;
  margin: 0 17px 0 0;
}
.menu-item + .menu-sep {
  margin-left: -5px;
}
.menubar .ic-line + .menu-sep {
  margin-left: 18px;
}
.menubar .redo {
  margin-left: 28px;
}
.gear-top {
  margin-left: auto;
  margin-right: -1px;
}

/* ribbon */
.ribbon {
  height: 161px;
  display: flex;
  background: #f8fbfd;
  border-top: 1px solid #e5e8ea;
  border-bottom: 2px solid #e7eaeb;
  padding-top: 5px;
}
.group {
  height: 150px;
  border-right: 1px solid #e3e6e8;
}
.group-body {
  height: 116px;
  padding-top: 10px;
}
.group-label {
  height: 20px;
  line-height: 20px;
  font-size: 14.5px;
  color: #555;
  text-align: center;
}
.g-selection { width: 98px; padding-left: 3px; }
.g-image { width: 190px; }
.g-tools { width: 172px; }
.g-brushes { width: 83px; }
.g-shapes { width: 347px; }
.g-size { width: 70px; }
.g-colours { width: 471px; }
.g-layers { width: 80px; border-right: none; }

.col-center {
  display: flex;
  flex-direction: column;
  align-items: center;
}
.g-selection .col-center {
  padding-top: 37px;
}
.chev-big {
  margin-top: 10px;
}
.g-brushes .col-center {
  padding-top: 35px;
}
.chev-brush {
  margin-top: 5px;
}
.g-size .col-center {
  padding-top: 37px;
}
.chev-size {
  margin-top: 14px;
}
.g-layers .col-center {
  padding-top: 45px;
}
.tool-grid {
  display: grid;
  grid-template-rows: 50px 50px;
  align-items: center;
  justify-items: center;
}
.image-grid {
  grid-template-columns: 70px 72px 1fr;
}
.image-grid .split {
  justify-self: start;
  margin-left: 3px;
}
.ic-wide-span {
  grid-row: 1 / 3;
  grid-column: 3;
  justify-self: start;
  margin-left: 0;
}
.tools-grid {
  grid-template-columns: 50px 50px 50px;
  padding-left: 11px;
}
.split {
  display: flex;
  align-items: center;
  gap: 8px;
}
.shapes-row {
  display: flex;
}
.shape-box {
  width: 243px;
  height: 89px;
  margin: 5px 0 0 17px;
  border: 1px solid #e6e9eb;
  border-radius: 6px;
  display: grid;
  grid-template-columns: repeat(8, 28px);
  grid-template-rows: repeat(3, 28px);
  align-items: center;
  justify-items: center;
  padding: 0 0 0 7px;
  align-content: start;
}
.shape {
  width: 20px;
  height: 20px;
  fill: none;
  stroke: #222;
  stroke-width: 1.4;
}
.shape-on {
  width: 24px;
  height: 25px;
  border: 1px solid #1e6fc8;
  border-radius: 5px;
  display: flex;
  align-items: center;
  justify-content: center;
}
.shape-opts {
  margin-left: 20px;
  display: grid;
  grid-template-rows: 50px 50px;
  align-items: center;
}
.size-ico {
  fill: none;
  stroke: #111;
}

/* colours */
.colours-row {
  display: flex;
  padding: 15px 0 0 28px;
}
.current {
  width: 36px;
  margin-right: 22px;
  display: flex;
  flex-direction: column;
  align-items: center;
  gap: 13px;
  padding-top: 3px;
}
.cur-primary {
  width: 36px;
  height: 36px;
  border: 2px solid #3a8fd8;
  border-radius: 50%;
  padding: 2px;
}
.cur-primary span {
  display: block;
  height: 28px;
  border-radius: 50%;
  background: #ed1c24;
  border: 1px solid #a9a9a9;
}
.cur-secondary {
  width: 30px;
  height: 30px;
  border-radius: 50%;
  background: #fff;
  border: 2px solid #c4c4c4;
}
.palette {
  width: 300px;
  height: 90px;
  display: grid;
  grid-template-columns: repeat(10, 30px);
  grid-template-rows: repeat(3, 30px);
  align-items: center;
  justify-items: center;
}
.sw {
  width: 20px;
  height: 20px;
  border-radius: 50%;
  border: 1px solid #a0a0a0;
}
.c1 { background: #000; border-color: #000; }
.c2 { background: #7f7f7f; border-color: #6f6f6f; }
.c3 { background: #880015; border-color: #77000f; }
.c4 { background: #ed1c24; border-color: #c91a20; }
.c5 { background: #ff7f27; border-color: #b98257; }
.c6 { background: #fff200; border-color: #b9b060; }
.c7 { background: #22b14c; border-color: #2f9a4e; }
.c8 { background: #00a2e8; border-color: #1b92c6; }
.c9 { background: #3f48cc; border-color: #3a42b0; }
.c10 { background: #a349a4; border-color: #8f4a90; }
.c11 { background: #fff; }
.c12 { background: #c3c3c3; border-color: #999; }
.c13 { background: #b97a57; border-color: #9a7059; }
.c14 { background: #ffaec9; border-color: #c79aa9; }
.c15 { background: #ffc90e; border-color: #b99a3a; }
.c16 { background: #efe4b0; border-color: #b3ab88; }
.c17 { background: #b5e61d; border-color: #92b03a; }
.c18 { background: #99d9ea; border-color: #86a9b3; }
.c19 { background: #7092be; border-color: #5f7a9c; }
.c20 { background: #c8bfe7; border-color: #a39db8; }
.wheel {
  position: relative;
  width: 30px;
  height: 30px;
  margin: 32px 0 0 24px;
  border-radius: 50%;
  background:
    radial-gradient(circle, #fff 0%, rgba(255, 255, 255, 0.6) 25%, rgba(255, 255, 255, 0) 70%),
    conic-gradient(#ffe600, #2fd33a, #19d3e6, #2b57ff, #e600ff, #ff0022, #ff9900, #ffe600);
}
.wheel-plus {
  position: absolute;
  left: 18px;
  top: -4px;
  width: 16px;
  height: 16px;
  border-radius: 50%;
  background: #fff;
  border: 1px solid #666;
  font-size: 15px;
  line-height: 12px;
  text-align: center;
  color: #444;
  font-weight: 300;
}

.ribbon-gap {
  height: 32px;
  background: linear-gradient(90deg, #f2f5f7, #f0f5f5);
}

/* browser */
.work {
  height: 1048px;
  display: flex;
}
.browser {
  width: 2533px;
  height: 1048px;
  display: flex;
  flex-direction: column;
  overflow: hidden;
  background: #fafafa;
}
.canvas-edge {
  flex: 1;
  background: linear-gradient(90deg, #f5f1ec, #f8f4ee);
  border-left: 1px dashed #c9c9c9;
  margin-left: 1px;
}
.tabstrip {
  height: 51px;
  flex-shrink: 0;
  display: flex;
  align-items: flex-end;
  background: #2e383e;
  padding-left: 8px;
  color: #fff;
  font-size: 14px;
}
.tab-search {
  width: 34px;
  height: 34px;
  margin-bottom: 8px;
  margin-right: 8px;
  border-radius: 10px;
  background: #3c4850;
  display: flex;
  align-items: center;
  justify-content: center;
}
.tab {
  height: 43px;
  display: flex;
  align-items: center;
  padding-bottom: 9px;
}
.tab-active {
  width: 290px;
  padding-left: 10px;
  background: #465660;
  border-radius: 12px 12px 0 0;
}
.tab-other {
  width: 300px;
  padding-left: 19px;
}
.tab-title {
  margin-left: 10px;
  white-space: nowrap;
}
.tab-active .tab-title {
  margin-left: 12px;
  width: 208px;
}
.tab-active .tab-x {
  margin-left: 17px;
}
.tab-other .tab-title {
  width: 210px;
}
.fade {
  -webkit-mask-image: linear-gradient(90deg, #000 88%, transparent);
  mask-image: linear-gradient(90deg, #000 88%, transparent);
}
.tab-x {
  margin-left: 14px;
  font-size: 13px;
}
.tab-sep {
  width: 1px;
  height: 20px;
  background: #5b666d;
  margin: 0 0 16px 1px;
}
.tab-plus {
  margin: 0 0 9px 12px;
  font-size: 28px;
  line-height: 30px;
}
.chrome-btns {
  align-self: center;
  padding-right: 0;
  margin-right: -5px;
  margin-top: 0;
}
.toolbar {
  height: 59px;
  flex-shrink: 0;
  display: flex;
  align-items: flex-start;
  background: #465660;
  padding: 8px 0 0 17px;
}
.nav {
  margin: 11px 25px 0 0;
}
.dim-nav {
  opacity: 0.45;
}
.omnibox {
  width: 2158px;
  height: 41px;
  margin-left: -2px;
  flex-shrink: 0;
  border-radius: 21px;
  background: #333f46;
  display: flex;
  align-items: center;
  padding-left: 8px;
  color: #b9c1c6;
}
.site-btn {
  width: 28px;
  height: 28px;
  flex-shrink: 0;
  border-radius: 50%;
  background: #465660;
  display: flex;
  align-items: center;
  justify-content: center;
}
.url {
  margin-left: 11px;
  width: 2058px;
  flex-shrink: 0;
  font-size: 16.7px;
  white-space: nowrap;
}
.url b {
  font-weight: 400;
  color: #fff;
}
.star {
  margin-left: 13px;
  fill: none;
  stroke: #c9cfd3;
  stroke-width: 1.7;
}
.side-ico {
  margin: 7px 0 0 24px;
}
.avatar-j {
  width: 24px;
  height: 24px;
  flex-shrink: 0;
  margin: 9px 0 0 24px;
  border-radius: 50%;
  background: #0557a5;
  color: #fff;
  font-size: 12px;
  line-height: 24px;
  text-align: center;
}
.finish-pill {
  width: 140px;
  height: 41px;
  flex-shrink: 0;
  margin-left: 16px;
  border-radius: 21px 0 0 21px;
  background: #2e383e;
  color: #fff;
  font-size: 14px;
  line-height: 40px;
  padding-left: 15px;
  position: relative;
  white-space: nowrap;
}
.dots {
  position: absolute;
  left: 118px;
  top: 12px;
  width: 3px;
  height: 3px;
  background: #fff;
  border-radius: 50%;
  box-shadow: 0 7px 0 #fff, 0 14px 0 #fff;
}
.bookmarks {
  height: 42px;
  flex-shrink: 0;
  background: #465660;
  display: flex;
  align-items: flex-start;
  padding-left: 17px;
  color: #fff;
  font-size: 14px;
}
.bm {
  display: flex;
  align-items: center;
  height: 33px;
  margin-right: 22px;
  gap: 8px;
}
.bm-wide {
  margin-right: 27px;
}
.folder {
  width: 22px;
  height: 20px;
  fill: none;
  stroke: #cdd2d5;
  stroke-width: 1.4;
}
.appbar {
  height: 50px;
  flex-shrink: 0;
  display: flex;
  align-items: center;
  background: #0078d4;
  color: #fff;
  padding-left: 20px;
}
.app-name {
  font-size: 16.5px;
  font-weight: 600;
}
.app-icons {
  margin-left: auto;
  display: flex;
  align-items: center;
  height: 100%;
}
.app-ico {
  position: relative;
  width: 51px;
  display: flex;
  justify-content: center;
}
.help {
  font-size: 25px;
  line-height: 30px;
  font-weight: 300;
}
.badge {
  position: absolute;
  left: 28px;
  top: -12px;
  width: 22px;
  height: 30px;
  border-radius: 50%;
  background: #e81123;
  font-style: normal;
  font-size: 12px;
  line-height: 28px;
  text-align: center;
}
.sub-box {
  margin-left: 6px;
  width: 185px;
  height: 30px;
  padding-left: 16px;
  border-left: 1px solid #7bb8e8;
  white-space: nowrap;
}
.sub-name {
  font-size: 16.5px;
  line-height: 20px;
  margin-top: -6px;
}
.sub-ws {
  font-size: 14px;
  font-weight: 700;
  line-height: 24px;
  margin-top: 2px;
}
.chev-sub {
  width: 18px;
  height: 18px;
  margin-left: 5px;
}
.avatar-p {
  width: 34px;
  height: 30px;
  margin-left: 16px;
  margin-right: -11px;
  padding-left: 6px;
  flex-shrink: 0;
  border-left: 1px solid #7bb8e8;
  position: relative;
  color: #223;
  font-size: 13px;
  line-height: 30px;
  background: radial-gradient(circle at 23px 15px, #5a6fe0 15px, transparent 16px);
}

/* studio */
.studio {
  flex: 1;
  display: flex;
  min-height: 0;
}
.sidebar {
  width: 285px;
  flex-shrink: 0;
  background: #fff;
  border-right: 1px solid #e8e8e8;
  box-shadow: 1px 0 3px rgba(0, 0, 0, 0.08);
  font-size: 16px;
  color: #444;
  z-index: 1;
}
.burger {
  height: 40px;
  padding: 13px 0 0 25px;
  stroke: #2f6fd0;
  stroke-width: 1.4;
}
.nav-row {
  position: relative;
  height: 45px;
  display: flex;
  align-items: center;
  padding-left: 20px;
  gap: 13px;
}
.nav-row.first {
  margin-top: 12px;
}
.nav-row.back {
  margin-bottom: 20px;
}
.nav-ico {
  width: 21px;
  height: 21px;
  fill: none;
  stroke: #555;
  stroke-width: 1.3;
}
.nav-head {
  height: 45px;
  margin-top: 9px;
  padding-left: 20px;
  font-size: 16.5px;
  line-height: 45px;
  font-weight: 600;
  color: #111;
}
.nav-head.assets {
  margin-top: 8px;
}
.nav-head.assets + .nav-row.first {
  margin-top: 13px;
}
.nav-row.active {
  background: #f6f6f6;
  color: #222;
}
.nav-row.active::before {
  content: "";
  position: absolute;
  left: 7px;
  top: 13px;
  width: 4px;
  height: 20px;
  border-radius: 2px;
  background: #0a5fdd;
}
.main {
  flex: 1;
  min-width: 0;
  background: #fafafa;
  display: flex;
  flex-direction: column;
}
.crumbs {
  height: 42px;
  flex-shrink: 0;
  display: flex;
  align-items: center;
  padding-left: 25px;
  gap: 17px;
  font-size: 16.4px;
  color: #333;
}
.crumbs a {
  color: #1d6fdc;
}
.crumb-sep {
  fill: none;
  stroke: #777;
  stroke-width: 1;
}
.page-title {
  height: 64px;
  flex-shrink: 0;
  display: flex;
  align-items: center;
  padding: 0 0 0 30px;
  border-bottom: 1px solid #e0e0e0;
}
.page-title h1 {
  font-size: 21.5px;
  font-weight: 600;
  color: #1a1a1a;
}
.chip {
  margin: 4px 0 0 8px;
  height: 18px;
  padding: 0 5px;
  border-radius: 9px;
  background: #efefef;
  color: #555;
  font-size: 12px;
  line-height: 18px;
}
.wizard {
  flex: 1;
  display: flex;
  min-height: 0;
}
.steps {
  width: 247px;
  flex-shrink: 0;
  border-right: 1px solid #d6d6d6;
  padding: 34px 0 0 30px;
  font-size: 18.6px;
  color: #444;
}
.step {
  height: 20px;
  display: flex;
  align-items: center;
  gap: 15px;
  white-space: nowrap;
}
.step-ico {
  width: 20px;
  height: 20px;
}
.solid {
  fill: #107c10;
  stroke: none;
}
.tick {
  fill: none;
  stroke: #fff;
  stroke-width: 2;
}
.current-step {
  font-weight: 600;
  color: #222;
}
.num {
  width: 20px;
  height: 20px;
  border-radius: 50%;
  color: #fff;
  font-size: 11px;
  font-weight: 400;
  line-height: 20px;
  text-align: center;
}
.num-blue {
  background: #0a5fdd;
}
.num-gray {
  background: #a0a0a0;
}
.link {
  width: 2px;
  height: 25px;
  margin: 8px 0 7px 9px;
  background: #d4d4d4;
}
.link.done {
  background: #107c10;
}
.content {
  flex: 1;
  padding: 32px 0 0 29px;
  overflow: hidden;
}
.content h2 {
  font-size: 21px;
  font-weight: 600;
  line-height: 30px;
  color: #1a1a1a;
}
.desc {
  margin-top: 21px;
  font-size: 16.6px;
  line-height: 24px;
  color: #444;
}
.label {
  font-size: 16.5px;
  font-weight: 600;
  line-height: 24px;
  color: #222;
}
.upload-label {
  margin-top: 38px;
}
.browse {
  display: flex;
  align-items: center;
  justify-content: center;
  gap: 10px;
  width: 134px;
  height: 40px;
  margin-top: 9px;
  padding-top: 2px;
  border: none;
  border-radius: 2px;
  background: #0a5fdd;
  color: #fff;
  font: 600 16px "Open Sans", sans-serif;
}
.browse .chev {
  width: 14px;
  height: 14px;
  margin-top: -4px;
}
.inputs-label {
  margin-top: 22px;
  font-size: 16.5px;
  line-height: 24px;
  color: #222;
}
.input-card {
  width: 1299px;
  height: 367px;
  margin-top: 6px;
  padding: 13px 10px 0;
  background: #f8f8f8;
  box-shadow: 0 1px 4px rgba(0, 0, 0, 0.25);
}
.card-top {
  display: flex;
  align-items: center;
  height: 24px;
  font-size: 15.6px;
  color: #444;
}
.copy {
  margin-left: 8px;
  fill: none;
  stroke: #1d6fdc;
  stroke-width: 1.3;
}
.card-top span + .copy {
  margin-left: 13px;
}
.copy + .copy {
  margin-left: 2px;
}
.card-x {
  margin-left: auto;
  fill: none;
  stroke: #1d6fdc;
  stroke-width: 1.5;
}
.field-label {
  font-size: 16.5px;
  font-weight: 600;
  line-height: 24px;
  color: #333;
}
.field-label i {
  font-style: normal;
  color: #a4262c;
}
.l-first {
  margin-top: 25px;
}
.l-second {
  margin-top: 15px;
}
.l-third {
  margin-top: 14px;
}
.field {
  position: relative;
  height: 40px;
  margin-top: 5px;
  padding-left: 10px;
  border-radius: 2px;
  display: flex;
  align-items: center;
  font-size: 16px;
  color: #333;
}
.f-dark {
  margin-top: 6px;
  border: 1px solid #111;
}
.f-select {
  justify-content: space-between;
  padding-right: 14px;
  background: #fff;
  border: 1px solid #444;
}
.f-select .chev {
  width: 16px;
  height: 16px;
}
.f-focus {
  height: 41px;
  border: 2px solid #0a5fdd;
  padding-left: 9px;
}
.caret {
  width: 1px;
  height: 24px;
  margin-left: 0;
  background: #111;
}
.see-less {
  margin-top: 20px;
  padding-left: 11px;
  font-size: 16.5px;
  line-height: 24px;
  color: #444;
}
.add-input {
  display: flex;
  align-items: center;
  height: 24px;
  margin: 16px 0 0 4px;
  gap: 11px;
  font-size: 16.5px;
  color: #444;
  stroke: #555;
  stroke-width: 1.2;
}
.outputs-label {
  margin-top: 30px;
}

.hscroll-band {
  height: 13px;
  background: #f1f3f3;
  border-bottom: 1px solid #e7e7e7;
}
.statusbar {
  height: 47px;
  display: flex;
  align-items: center;
  background: linear-gradient(90deg, #f6f1ed, #f9f1ea);
  font-size: 14px;
  color: #333;
}
.st {
  height: 26px;
  display: flex;
  align-items: center;
}
.st-pos {
  width: 173px;
  padding-left: 21px;
  gap: 10px;
  border-right: 1px solid #e4e0dc;
}
.st-sel {
  width: 170px;
  padding-left: 16px;
  border-right: 1px solid #e4e0dc;
}
.st-size {
  padding-left: 16px;
  gap: 10px;
}
.st-right {
  margin-left: auto;
  display: flex;
  align-items: center;
  padding-right: 15px;
}
.zoom-box {
  width: 113px;
  height: 34px;
  margin: 0 21px 0 21px;
  padding: 0 19px 0 13px;
  background: #fdfbf8;
  border: 1px solid #eee9e3;
  border-bottom-color: #d9d5d0;
  border-radius: 4px;
  display: flex;
  align-items: center;
  justify-content: space-between;
}
.slider {
  position: relative;
  width: 163px;
  height: 6px;
  margin: 2px 15px 0 15px;
  border-radius: 3px;
  background: #8d8a86;
}
.slider-fill {
  position: absolute;
  left: 0;
  top: 0;
  width: 30px;
  height: 6px;
  border-radius: 3px;
  background: #0067c0;
}
.slider-thumb {
  position: absolute;
  left: 16px;
  top: -9px;
  width: 24px;
  height: 24px;
  border-radius: 50%;
  background: #0067c0;
  border: 5px solid #fdfbf8;
}

/* overlays */
.red-arrow {
  position: absolute;
  left: 452px;
  top: 1088px;
  fill: none;
  stroke: #ed1c24;
  stroke-width: 4.5;
}
.handle {
  position: absolute;
  width: 8px;
  height: 10px;
  background: #fff;
  border: 2px solid #111;
}
.h-top { left: 1249px; top: 264px; }
.h-corner { left: 2533px; top: 264px; }
.h-side { left: 2533px; top: 958px; }
.vscroll {
  position: absolute;
  left: 2547px;
  top: 241px;
  width: 13px;
  height: 1079px;
  background: #fafafa;
}
.v-thumb {
  position: absolute;
  left: 2px;
  top: 19px;
  width: 9px;
  height: 783px;
  border-radius: 5px;
  background: #8b8b8b;
}
.arrow-up, .arrow-down {
  position: absolute;
  left: 1px;
  width: 0;
  height: 0;
  border-left: 5.5px solid transparent;
  border-right: 5.5px solid transparent;
}
.arrow-up {
  top: 5px;
  border-bottom: 9px solid #8b8b8b;
}
.arrow-down {
  top: 1061px;
  border-top: 9px solid #8b8b8b;
}
.hscroll {
  position: absolute;
  left: 0;
  top: 1319px;
  width: 2547px;
  height: 13px;
}
.h-thumb {
  position: absolute;
  left: 75px;
  top: 2px;
  width: 2446px;
  height: 9px;
  border-radius: 5px;
  background: #8b8b8b;
}
.arrow-left, .arrow-right {
  position: absolute;
  top: 1px;
  width: 0;
  height: 0;
  border-top: 5.5px solid transparent;
  border-bottom: 5.5px solid transparent;
}
.arrow-left {
  left: 6px;
  border-right: 8px solid #8b8b8b;
}
.arrow-right {
  left: 2531px;
  border-left: 8px solid #8b8b8b;
}
```
